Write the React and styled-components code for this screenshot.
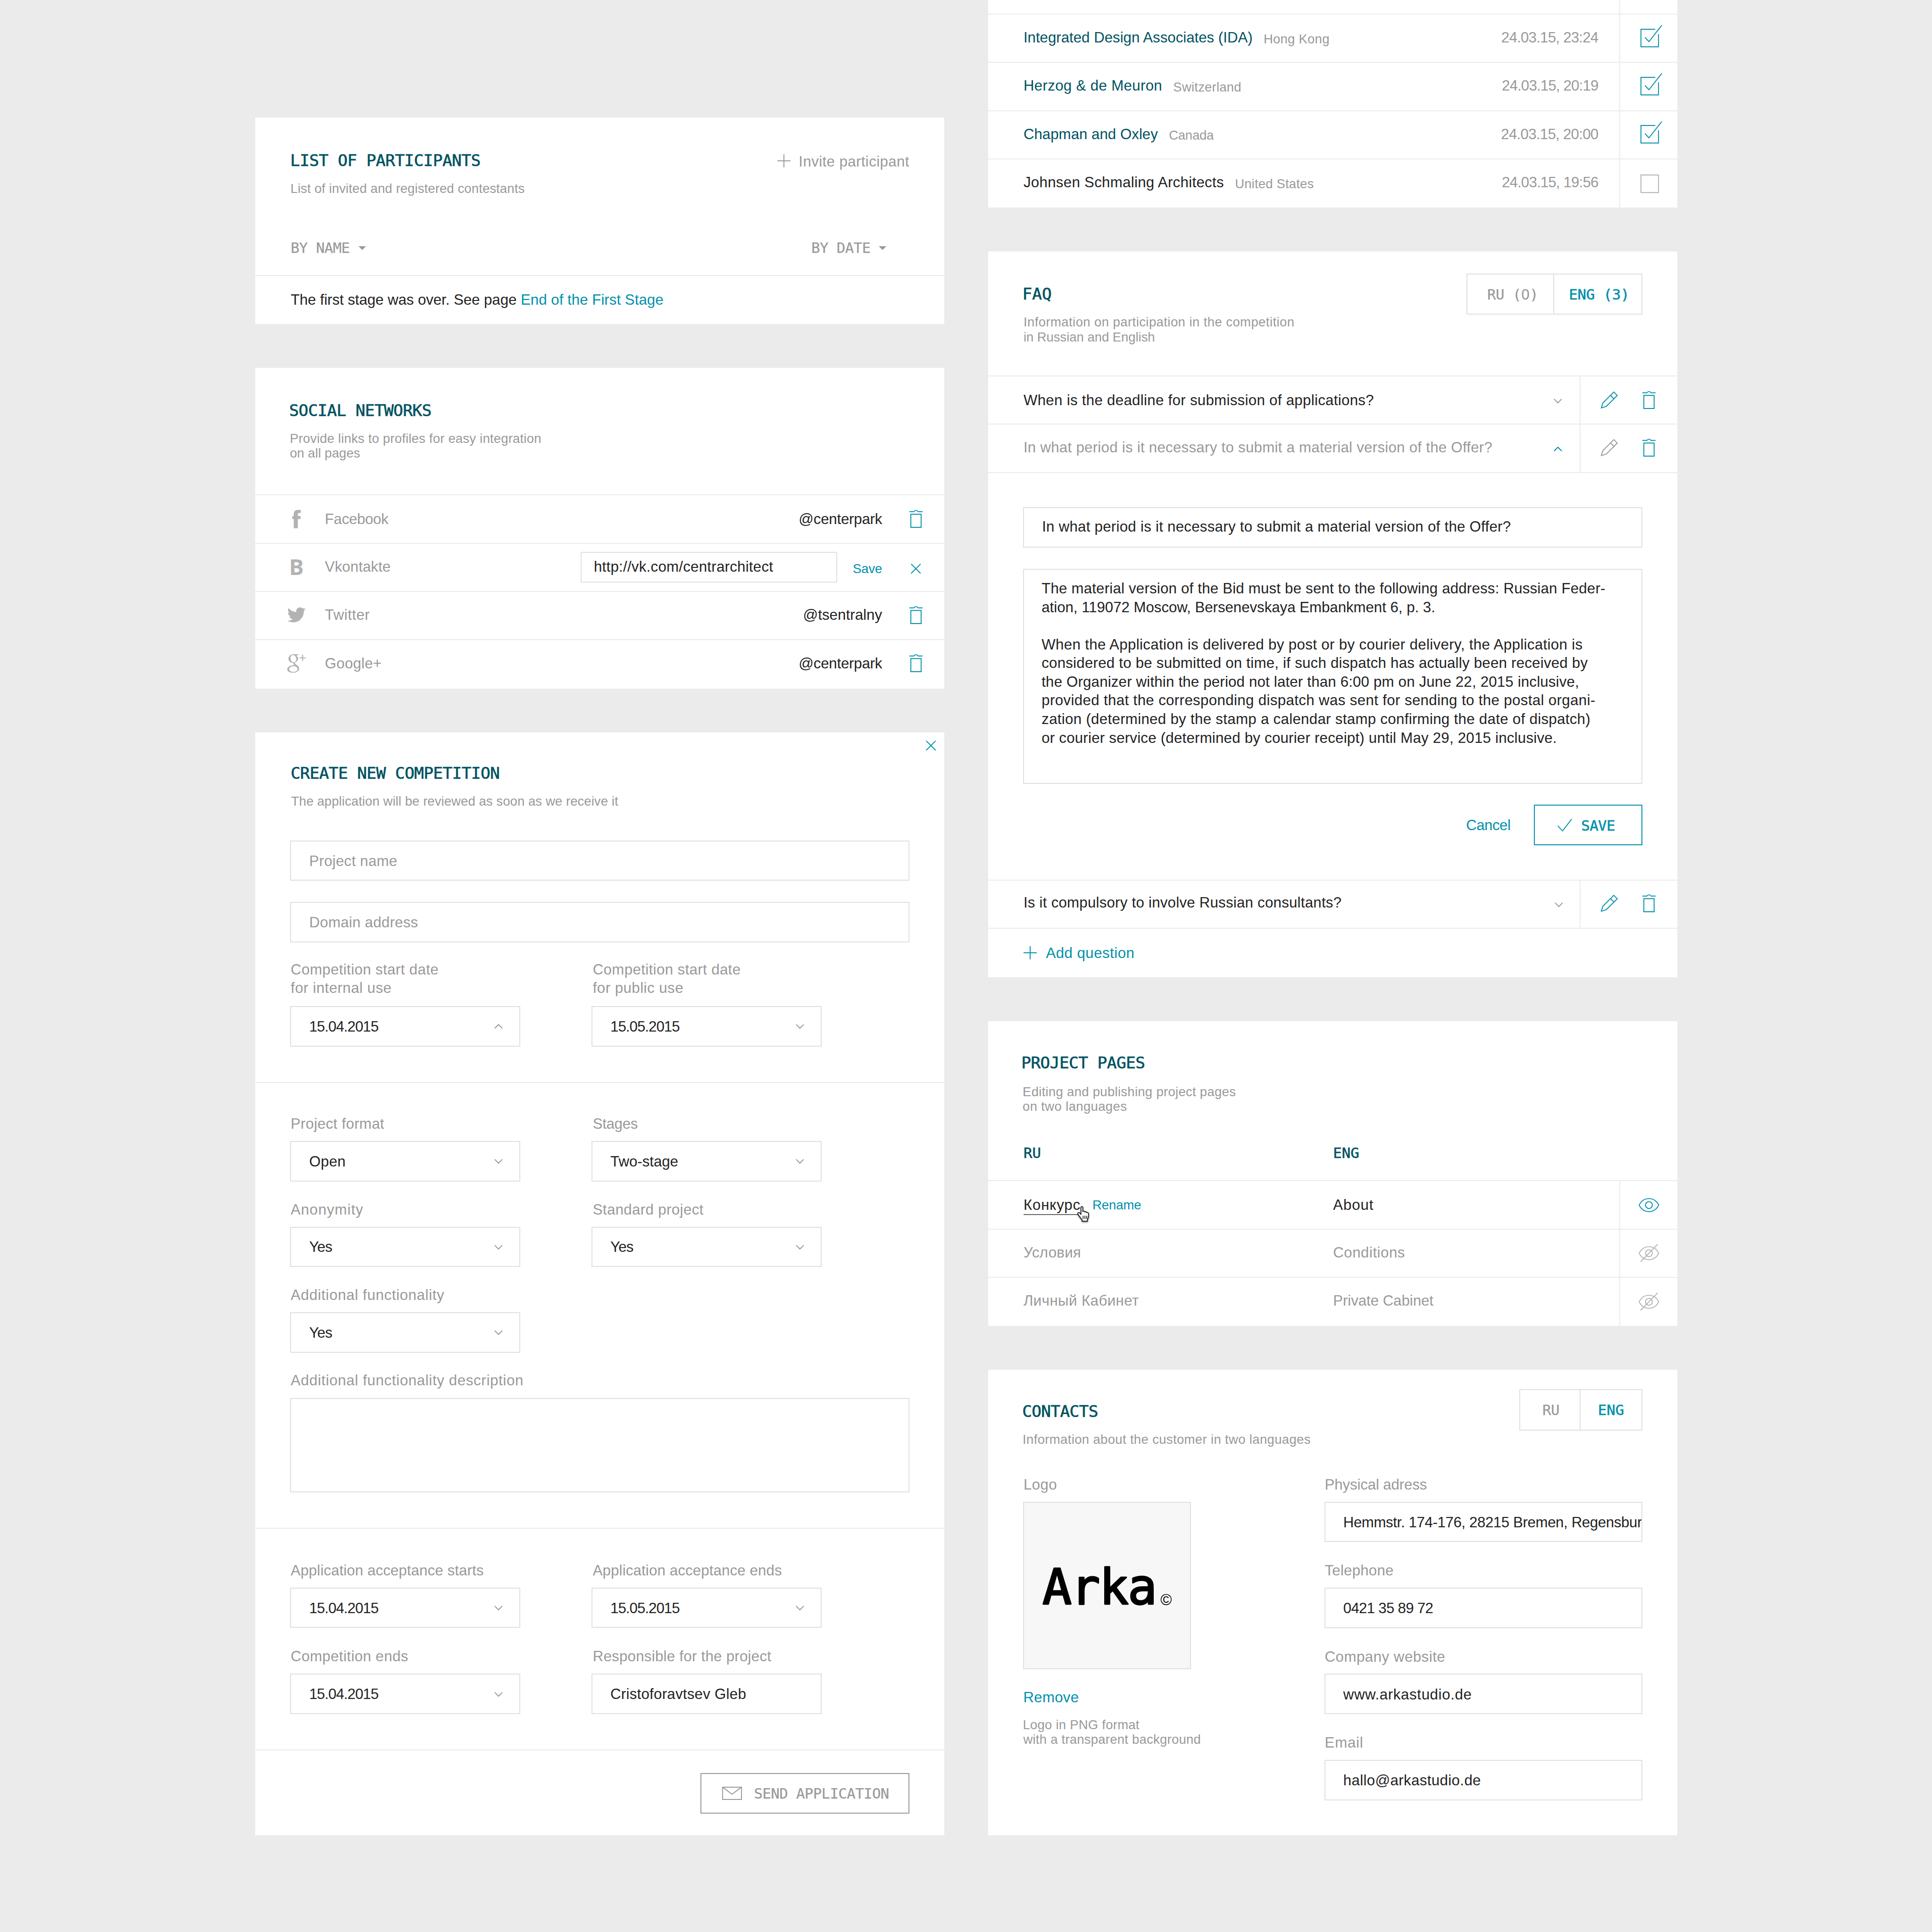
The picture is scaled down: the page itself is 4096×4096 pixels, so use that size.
import React from "react";
import styled, { createGlobalStyle } from "styled-components";
import { FaTwitter } from "react-icons/fa";

const SCALE = 4096 / 4400;
const u = (n) => `${(n * SCALE).toFixed(3)}px`;

const c = {
  page: "#ebebeb",
  line: "#ebebeb",
  field: "#e0e0e0",
  ink: "#222222",
  grey: "#999999",
  soft: "#b3b3b3",
  teal: "#0090ab",
  deep: "#005261",
};
const sans = `"Liberation Sans", Arial, sans-serif`;
const mono = `"DejaVu Sans Mono", monospace`;

const GlobalStyle = createGlobalStyle`
  *, *::before, *::after { box-sizing: border-box; }
  html, body { margin: 0; background: ${c.page}; }
  body { overflow: hidden; }
`;

/* ---------- layout ---------- */

const Page = styled.main`
  display: flex;
  align-items: flex-start;
  gap: ${u(99)};
  width: ${u(4400)};
  height: ${u(4400)};
  padding-left: ${u(581)};
  background: ${c.page};
  color: ${c.ink};
  font-family: ${sans};
  overflow: hidden;
`;

const Column = styled.div`
  display: flex;
  flex-direction: column;
  gap: ${u(100)};
  width: ${u(1570)};
  padding-top: ${(p) => u(p.$top || 0)};
`;

const Card = styled.section`
  position: relative;
  display: flex;
  flex-direction: column;
  background: #fff;
  height: ${(p) => u(p.$h)};
`;

const Header = styled.header`
  display: flex;
  justify-content: space-between;
  align-items: flex-start;
  flex: none;
  height: ${(p) => u(p.$h)};
  padding: 0 ${u(80)};
`;

const Heading = styled.div`
  display: flex;
  flex-direction: column;
  flex: 1;
  padding-top: ${(p) => u(p.$top)};
`;

const Title = styled.h2`
  margin: 0 0 ${(p) => u(p.$gap)} ${(p) => u(p.$x || 0)};
  font: 400 ${u(37)} / ${u(40)} ${mono};
  letter-spacing: ${(p) => u(p.$ls ?? -0.64)};
  color: ${c.deep};
  white-space: nowrap;
  -webkit-text-stroke: 0.7px ${c.deep};
`;

/* ---------- text ---------- */

const Text = styled.span`
  flex: none;
  font-size: ${u(33.5)};
  line-height: ${u(42)};
  letter-spacing: ${(p) => u((p.$ls ?? 0.5) - 0.25)};
  color: ${(p) => c[p.$c || "ink"]};
  white-space: pre;
`;

const Small = styled(Text)`
  font-size: ${u(29.5)};
  line-height: ${u(34)};
  letter-spacing: ${(p) => u((p.$ls ?? 0.7) - 0.5)};
  color: ${(p) => c[p.$c || "grey"]};
  margin-left: ${(p) => u(p.$x || 0)};
`;

const Caps = styled.span`
  padding-top: ${u(2)};
  font: 400 ${u(33)} / ${u(40)} ${mono};
  letter-spacing: ${(p) => u(p.$ls ?? -0.65)};
  color: ${(p) => c[p.$c || "grey"]};
  white-space: pre;
  -webkit-text-stroke: ${(p) => (p.$strong ? "0.6px" : "0.25px")} ${(p) => c[p.$c || "grey"]};
`;

const PlainZero = styled.span`
  display: inline-block;
  width: ${u(19.2)};
  text-align: center;
  letter-spacing: 0;
  font-family: ${sans};
`;

const Spacer = styled.span`
  flex: 1;
`;

/* ---------- rows ---------- */

const Row = styled.div`
  display: flex;
  align-items: stretch;
  flex: none;
  height: ${(p) => u(p.$h || 110)};
  border-top: 2px solid ${c.line};
`;

const RowMain = styled.div`
  display: flex;
  align-items: center;
  flex: 1;
  min-width: 0;
  padding: 0 ${(p) => u(p.$right ?? 80)} ${(p) => u(p.$lift || 0)} ${u(81)};
`;

const RowSide = styled.div`
  display: flex;
  align-items: center;
  justify-content: ${(p) => (p.$w > 200 ? "flex-end" : "center")};
  gap: ${u(56)};
  flex: none;
  width: ${(p) => u(p.$w)};
  padding: 0 ${(p) => u(p.$w > 200 ? 50 : 0)} ${(p) => u(p.$lift || 0)} 0;
  border-left: 2px solid ${c.line};
`;

const Action = styled.a`
  display: flex;
  align-items: center;
  gap: ${(p) => u(p.$gap || 19)};
  margin-top: ${(p) => u(p.$top || 0)};
`;

/* ---------- icons ---------- */

const Svg = styled.svg`
  display: block;
  flex: none;
  overflow: visible;
  width: ${(p) => u(p.$w)};
  height: ${(p) => u(p.$h)};
  fill: none;
  stroke: ${(p) => c[p.$c]};
  stroke-width: 2.1;
`;

const PlusSvg = styled(Svg)`
  margin-bottom: ${u(3)};
`;
const Plus = ({ color = "teal" }) => (
  <PlusSvg $w={30} $h={30} $c={color} viewBox="0 0 30 30">
    <path d="M15 0V30M0 15H30" />
  </PlusSvg>
);

const Trash = () => (
  <Svg $w={30} $h={41} $c="teal" viewBox="0 0 30 41">
    <path d="M0 4H10C11.300 3.900 11.600 1.200 15 1.200S18.700 3.900 20 4H30" />
    <path d="M3.300 10H26.700V39.700H3.300Z" />
  </Svg>
);

const Pencil = ({ color = "teal" }) => (
  <Svg $w={38} $h={38} $c={color} viewBox="0 0 38 38">
    <path d="M1 37.5L4.300 26.300L29.500 1.200L37.300 9L12.300 34.100ZM22 8.700L29.700 16.600" />
  </Svg>
);

const Chevron = ({ up, color = "grey" }) => (
  <Svg $w={19} $h={11} $c={color} viewBox="0 0 19 11">
    <path d={up ? "M.8 10L9.500 1.300L18.200 10" : "M.8 1L9.500 9.700L18.200 1"} />
  </Svg>
);

const Cross = () => (
  <Svg $w={23} $h={23} $c="teal" viewBox="0 0 23 23">
    <path d="M.7.7L22.300 22.300M22.300.7L.7 22.300" />
  </Svg>
);

const BoxSvg = styled(Svg)`
  margin-left: ${u(4)};
`;
const Checkbox = ({ checked }) => (
  <BoxSvg $w={42} $h={42} $c={checked ? "teal" : "soft"} viewBox="0 0 42 42">
    {checked ? (
      <path d="M33.500 1H1V41H41V12M10 19.500L19.200 29.300L48.500-8" />
    ) : (
      <path d="M1 1H41V41H1Z" />
    )}
  </BoxSvg>
);

const Eye = ({ off }) => (
  <Svg $w={47} $h={32} $c={off ? "soft" : "teal"} viewBox="0 0 47 32">
    <path d="M1.200 16C6 6.500 14 1.200 23.500 1.200S41 6.500 45.800 16C41 25.500 33 30.800 23.500 30.800S6 25.500 1.200 16Z" />
    <circle cx="23.500" cy="16" r="7.800" />
    {off && <path d="M43.500-4.500L4.500 35.500" />}
  </Svg>
);

const Envelope = () => (
  <Svg $w={45} $h={30} $c="grey" viewBox="0 0 45 30">
    <path d="M1 1H44V29H1ZM1.500 1.500L22.500 17L43.500 1.500" />
  </Svg>
);

const Tick = () => (
  <Svg $w={33} $h={29} $c="teal" viewBox="0 0 33 29">
    <path d="M.8 16L11.500 27.500L32.200.7" />
  </Svg>
);

const Triangle = styled.i`
  width: 0;
  height: 0;
  margin-top: ${u(3)};
  border: solid transparent;
  border-width: ${u(9.5)} ${u(9)} 0;
  border-top-color: ${c.grey};
`;

const Cursor = styled.svg`
  position: absolute;
  left: ${u(122)};
  top: ${u(24)};
  width: ${u(31)};
  height: ${u(37)};
  overflow: visible;
  filter: drop-shadow(0 2px 1.5px rgba(0, 0, 0, 0.4));
`;

const SocialSlot = styled.span`
  display: flex;
  align-items: center;
  justify-content: center;
  flex: none;
  width: ${u(42)};
  height: ${u(42)};
  margin: 0 ${u(44)} 0 ${u(-8)};
  color: ${c.soft};
  svg {
    display: block;
    width: ${u(42)};
    height: ${u(42)};
  }
`;

const LetterMark = styled.b`
  font: 700 ${u(50)} / ${u(42)} "Open Sans", ${sans};
`;

const SOCIAL_ICONS = {
  fb: (
    <svg viewBox="-11.500 0 42 42" fill="currentColor">
      <path d="M19.300 0H13C6.500 0 3.300 3.200 3.300 9.500V14H0V21H3.300V42H12.700V21H18.500L19.300 14H12.700V10C12.700 8.300 13.500 7 15.500 7H19.300Z" />
    </svg>
  ),
  vk: <LetterMark>B</LetterMark>,
  tw: <FaTwitter />,
  gp: (
    <svg viewBox="0 0 42 42" fill="currentColor">
      <path
        fillRule="evenodd"
        d="M27 0L22.500 3H20C23 4.500 24.800 7 24.800 10.200C24.800 14 22 16.200 19.500 18C17.500 19.500 17 20.500 18 21.800C19.500 24 27.200 26 27.200 32.500C27.200 38.500 21 42.300 13 42.300C5.500 42.300 0 39.500 0 34.500C0 28.500 6.500 25.500 15.500 25C13.800 23.300 13.300 21.500 14.300 19.800C7.500 20.200 2.700 16 2.700 10.300C2.700 4.500 7.500 0 14 0ZM13 1.800C9.500 1.800 7.300 4.500 7.300 8.500C7.300 13.500 10.300 18.200 14.800 18.200C18.500 18.200 20.600 15.500 20.600 11.800C20.600 6.500 17.300 1.800 13 1.800ZM17 27C9.500 27.300 4.300 29.500 4.300 33.800C4.300 37.800 8.500 40.200 14 40.200C19.800 40.200 23.500 37.800 23.500 33.800C23.500 31 21.500 29.500 17 27Z"
      />
      <path d="M28 7.200H33.900V1H36.200V7.200H42V9.500H36.200V15.500H33.900V9.500H28Z" />
    </svg>
  ),
};

/* ---------- form parts ---------- */

const Input = styled.div`
  display: flex;
  align-items: center;
  justify-content: space-between;
  flex: none;
  height: ${(p) => u(p.$h || 92)};
  padding: ${u(1.5)} ${(p) => u(p.$clip ? 0 : 38)} ${(p) => u(p.$lift || 0)} ${u(41)};
  border: 2px solid ${c.field};
  overflow: ${(p) => (p.$clip ? "hidden" : "visible")};
`;

const Area = styled.div`
  height: ${(p) => u(p.$h)};
  padding: ${u(22)} ${u(40)};
  border: 2px solid ${c.field};
`;

const Line = styled(Text)`
  display: block;
  height: ${u(42.5)};
  line-height: ${u(42.5)};
`;

const Field = styled.label`
  display: flex;
  flex-direction: column;
`;

const Label = styled.span`
  display: flex;
  flex-direction: column;
  padding: ${u(1)} 0 ${(p) => u((p.$gap ?? 19) - 1)} ${u(1)};
`;

const Grid = styled.div`
  display: grid;
  grid-template-columns: ${u(524)} ${u(524)};
  column-gap: ${u(162)};
  row-gap: ${(p) => u(p.$gap || 43)};

  ${Field}:nth-child(even) ${Label} {
    padding-left: ${u(3)};
  }
`;

const Section = styled.div`
  flex: none;
  height: ${(p) => u(p.$h)};
  padding: ${(p) => u(p.$top)} ${u(80)} 0;
  border-top: ${(p) => (p.$first ? "0" : `2px solid ${c.line}`)};
`;

const Stack = styled.div`
  display: flex;
  flex-direction: column;
  gap: ${(p) => u(p.$gap)};
  margin-bottom: ${(p) => u(p.$after || 0)};
`;

const Button = styled.button`
  display: flex;
  align-items: center;
  gap: ${(p) => u(p.$gap)};
  width: ${(p) => u(p.$w)};
  height: ${u(92)};
  margin: 0;
  padding: 0 0 0 ${(p) => u(p.$pad)};
  border: 2px solid ${(p) => c[p.$c]};
  background: none;
`;

const Actions = styled.div`
  display: flex;
  justify-content: flex-end;
  align-items: center;
  gap: ${u(53)};
`;

const Switch = styled.div`
  display: grid;
  grid-template-columns: calc(50% - 2px) 1fr;
  width: ${(p) => u(p.$w)};
  height: ${u(94)};
  margin-top: ${(p) => u(p.$top)};
  border: 2px solid ${c.field};
`;

const SwitchItem = styled.div`
  display: flex;
  align-items: center;
  justify-content: center;
  padding-left: ${(p) => u(p.$x || 0)};
  & + & {
    border-left: 2px solid ${c.field};
  }
`;

const CloseButton = styled.a`
  position: absolute;
  top: ${u(19)};
  right: ${u(19)};
`;

/* ---------- card: participants ---------- */

const SortBar = styled.div`
  display: flex;
  justify-content: space-between;
  margin-top: ${u(96)};
  padding: 0 ${u(52)} 0 ${u(1)};
`;
const Sort = styled.span`
  display: flex;
  align-items: center;
  gap: ${u(19.5)};
`;
const HeaderBlock = styled.header`
  flex: none;
  height: ${(p) => u(p.$h)};
  padding: 0 ${u(80)};
`;
const HeaderLine = styled.div`
  display: flex;
  justify-content: space-between;
  align-items: flex-start;
`;

const ParticipantsCard = () => (
  <Card $h={470}>
    <HeaderBlock $h={358}>
      <HeaderLine>
        <Heading $top={77.5}>
          <Title $gap={27} $ls={-0.61}>LIST OF PARTICIPANTS</Title>
          <Small $x={0.5} $ls={0.63}>List of invited and registered contestants</Small>
        </Heading>
        <Action $top={78.5}>
          <Plus color="grey" />
          <Text $c="grey" $ls={0.7}>Invite participant</Text>
        </Action>
      </HeaderLine>
      <SortBar>
        <Sort><Caps>BY NAME</Caps><Triangle /></Sort>
        <Sort><Caps>BY DATE</Caps><Triangle /></Sort>
      </SortBar>
    </HeaderBlock>
    <Row $h={112}>
      <RowMain>
        <Text $ls={0.22}>The first stage was over. See page </Text>
        <Text $c="teal" $ls={0.31}>End of the First Stage</Text>
      </RowMain>
    </Row>
  </Card>
);

/* ---------- card: social networks ---------- */

const SocialAction = styled.span`
  display: flex;
  justify-content: center;
  width: ${u(30)};
  margin-left: ${u(62)};
`;
const LinkInput = styled(Input)`
  width: ${u(584)};
  height: ${u(70)};
  padding: 0 0 ${u(2)} ${u(28)};
  margin: ${u(3)} ${u(36)} 0 0;
`;
const SaveLink = styled(Small)`
  padding-top: ${u(10)};
`;
const CrossSlot = styled.span`
  padding-top: ${u(9)};
`;

const NETWORKS = [
  { id: "fb", name: "Facebook", ls: -0.07, value: "@centerpark", vls: 0.05 },
  { id: "vk", name: "Vkontakte", ls: 0.32, value: "http://vk.com/centrarchitect", vls: 0.55, editing: true, lift: 3 },
  { id: "tw", name: "Twitter", ls: 0.8, value: "@tsentralny", vls: 0.35, lift: 3 },
  { id: "gp", name: "Google+", ls: 0.51, value: "@centerpark", vls: 0.05, lift: 3 },
];

const SocialCard = () => (
  <Card $h={730}>
    <Header $h={288}>
      <Heading $top={77}>
        <Title $gap={26.5} $x={-2.5} $ls={-0.68}>SOCIAL NETWORKS</Title>
        <Small $x={-1} $ls={0.73}>Provide links to profiles for easy integration</Small>
        <Small $x={-1} $ls={0.6}>on all pages</Small>
      </Heading>
    </Header>
    {NETWORKS.map((n) => (
      <Row key={n.id}>
        <RowMain $right={50} $lift={n.lift}>
          <SocialSlot>{SOCIAL_ICONS[n.id]}</SocialSlot>
          <Text $c="grey" $ls={n.ls}>{n.name}</Text>
          <Spacer />
          {n.editing ? (
            <>
              <LinkInput><Text $ls={n.vls}>{n.value}</Text></LinkInput>
              <SaveLink $c="teal" $ls={0.4}>Save</SaveLink>
              <SocialAction><CrossSlot><Cross /></CrossSlot></SocialAction>
            </>
          ) : (
            <>
              <Text $ls={n.vls}>{n.value}</Text>
              <SocialAction><Trash /></SocialAction>
            </>
          )}
        </RowMain>
      </Row>
    ))}
  </Card>
);

/* ---------- card: create competition ---------- */

const DescriptionField = styled(Field)`
  margin-top: ${u(41)};
`;

const Select = ({ label, ls, value, vls, lines, up, plain }) => (
  <Field>
    <Label $gap={lines ? 20.5 : 19}>
      {lines ? (
        lines.map(([t, l]) => <Line key={t} $c="grey" $ls={l}>{t}</Line>)
      ) : (
        <Text $c="grey" $ls={ls}>{label}</Text>
      )}
    </Label>
    <Input>
      <Text $ls={vls}>{value}</Text>
      {!plain && <Chevron up={up} />}
    </Input>
  </Field>
);

const CreateCard = () => (
  <Card $h={2512}>
    <CloseButton><Cross /></CloseButton>
    <Header $h={246}>
      <Heading $top={73.5}>
        <Title $gap={26.5} $x={1}>CREATE NEW COMPETITION</Title>
        <Small $x={2} $ls={0.6}>The application will be reviewed as soon as we receive it</Small>
      </Heading>
    </Header>
    <Section $first $h={550} $top={0}>
      <Stack $gap={48} $after={40}>
        <Input><Text $c="grey" $ls={0.54}>Project name</Text></Input>
        <Input><Text $c="grey" $ls={0.56}>Domain address</Text></Input>
      </Stack>
      <Grid>
        <Select lines={[["Competition start date", 0.68], ["for internal use", 0.78]]} value="15.04.2015" vls={-0.76} up />
        <Select lines={[["Competition start date", 0.68], ["for public use", 0.78]]} value="15.05.2015" vls={-0.76} />
      </Grid>
    </Section>
    <Section $h={1015} $top={71.5}>
      <Grid $gap={42}>
        <Select label="Project format" ls={0.6} value="Open" vls={0.6} />
        <Select label="Stages" ls={-0.05} value="Two-stage" vls={0.26} />
        <Select label="Anonymity" ls={1.31} value="Yes" vls={-0.6} />
        <Select label="Standard project" ls={0.67} value="Yes" vls={-0.6} />
        <Select label="Additional functionality" ls={0.96} value="Yes" vls={-0.6} />
      </Grid>
      <DescriptionField>
        <Label $gap={21}><Text $c="grey" $ls={0.97}>Additional functionality description</Text></Label>
        <Area $h={214} />
      </DescriptionField>
    </Section>
    <Section $h={505} $top={73.5}>
      <Grid>
        <Select label="Application acceptance starts" ls={0.39} value="15.04.2015" vls={-0.76} />
        <Select label="Application acceptance ends" ls={0.42} value="15.05.2015" vls={-0.76} />
        <Select label="Competition ends" ls={0.71} value="15.04.2015" vls={-0.76} />
        <Select label="Responsible for the project" ls={0.56} value="Cristoforavtsev Gleb" vls={0.55} plain />
      </Grid>
    </Section>
    <Section $h={196} $top={52}>
      <Actions>
        <Button $c="grey" $w={476} $pad={48} $gap={27}>
          <Envelope />
          <Caps>SEND APPLICATION</Caps>
        </Button>
      </Actions>
    </Section>
  </Card>
);

/* ---------- card: architects ---------- */

const ARCHITECTS = [
  { name: "Integrated Design Associates (IDA)", ls: 0.27, country: "Hong Kong", cls: 0.78, date: "24.03.15, 23:24", dls: -0.54, on: true },
  { name: "Herzog & de Meuron", ls: 0.64, country: "Switzerland", cls: 0.75, date: "24.03.15, 20:19", dls: -0.62, on: true },
  { name: "Chapman and Oxley", ls: 0.3, country: "Canada", cls: 0.3, date: "24.03.15, 20:00", dls: -0.5, on: true },
  { name: "Johnsen Schmaling Architects", ls: 0.6, country: "United States", cls: 0.7, date: "24.03.15, 19:56", dls: -0.62 },
];
const Country = styled(Small)`
  padding: ${u(6)} 0 0 ${u(25)};
`;
const CutRow = styled(Row)`
  height: ${u(31)};
  border-top: 0;
`;

const ArchitectsCard = () => (
  <Card $h={473}>
    <CutRow>
      <RowMain />
      <RowSide $w={132} />
    </CutRow>
    {ARCHITECTS.map((a, i) => (
      <Row key={a.name} $h={i === 3 ? 112 : 110}>
        <RowMain $right={48} $lift={i === 3 ? 5 : 3}>
          <Text $c={a.on ? "deep" : "ink"} $ls={a.ls}>{a.name}</Text>
          <Country $ls={a.cls}>{a.country}</Country>
          <Spacer />
          <Text $c="grey" $ls={a.dls}>{a.date}</Text>
        </RowMain>
        <RowSide $w={132} $lift={a.on ? 2 : 0}><Checkbox checked={a.on} /></RowSide>
      </Row>
    ))}
  </Card>
);

/* ---------- card: FAQ ---------- */

const OFFER = "In what period is it necessary to submit a material version of the Offer?";
const ANSWER = [
  ["The material version of the Bid must be sent to the following address: Russian Feder-", 0.49],
  ["ation, 119072 Moscow, Bersenevskaya Embankment 6, p. 3.", 0.25],
  [" ", 0],
  ["When the Application is delivered by post or by courier delivery, the Application is", 0.66],
  ["considered to be submitted on time, if such dispatch has actually been received by", 0.53],
  ["the Organizer within the period not later than 6:00 pm on June 22, 2015 inclusive,", 0.47],
  ["provided that the corresponding dispatch was sent for sending to the postal organi-", 0.67],
  ["zation (determined by the stamp a calendar stamp confirming the date of dispatch)", 0.61],
  ["or courier service (determined by courier receipt) until May 29, 2015 inclusive.", 0.52],
];

const ChevronDrop = styled.span`
  padding-top: ${(p) => u(p.$y)};
`;
const Question = ({ text, ls, open, lift = 0, right = 40 }) => (
  <Row>
    <RowMain $right={right} $lift={lift}>
      <Text $c={open ? "grey" : "ink"} $ls={ls}>{text}</Text>
      <Spacer />
      <ChevronDrop $y={lift ? 8 : 5}><Chevron up={open} color={open ? "teal" : "grey"} /></ChevronDrop>
    </RowMain>
    <RowSide $w={222} $lift={lift ? 4 : 0}>
      <Pencil color={open ? "grey" : "teal"} />
      <Trash />
    </RowSide>
  </Row>
);
const Editor = styled.div`
  display: flex;
  flex-direction: column;
  gap: ${u(48)};
  flex: none;
  height: ${u(928)};
  padding: ${u(78)} ${u(80)} 0;
  border-top: 2px solid ${c.line};
`;

const FaqCard = () => (
  <Card $h={1653}>
    <Header $h={282}>
      <Heading $top={77}>
        <Title $gap={26.5} $x={-1.5} $ls={-0.03}>FAQ</Title>
        <Small $x={1} $ls={0.97}>Information on participation in the competition</Small>
        <Small $x={1} $ls={0.47}>in Russian and English</Small>
      </Heading>
      <Switch $w={400} $top={50}>
        <SwitchItem $x={10}><Caps $ls={-0.5}>RU (<PlainZero>0</PlainZero>)</Caps></SwitchItem>
        <SwitchItem $x={6}><Caps $c="teal" $strong $ls={-0.2}>ENG (3)</Caps></SwitchItem>
      </Switch>
    </Header>
    <Question text="When is the deadline for submission of applications?" ls={0.6} />
    <Question text={OFFER} ls={0.56} open lift={5} />
    <Editor>
      <Input $lift={5}><Text $ls={0.56}>{OFFER}</Text></Input>
      <Area $h={490}>
        {ANSWER.map(([t, l]) => <Line key={t} $ls={l}>{t}</Line>)}
      </Area>
      <Actions>
        <Text $c="teal" $ls={-0.28}>Cancel</Text>
        <Button $c="teal" $w={247} $pad={52} $gap={21}>
          <Tick />
          <Caps $c="teal" $strong>SAVE</Caps>
        </Button>
      </Actions>
    </Editor>
    <Question text="Is it compulsory to involve Russian consultants?" ls={0.53} lift={6} right={38} />
    <Row $h={112}>
      <RowMain>
        <Action $gap={21} $top={2}><Plus /><Text $c="teal" $ls={0.79}>Add question</Text></Action>
      </RowMain>
    </Row>
  </Card>
);

/* ---------- card: project pages ---------- */

const Half = styled.div`
  display: flex;
  align-items: center;
  gap: ${u(27)};
  flex: none;
  width: ${u(705)};
`;
const PageHeads = styled.div`
  display: flex;
  margin-top: ${u(67)};
  padding-left: ${u(1)};
`;
const Hovered = styled.span`
  position: relative;
  margin-top: ${u(2)};
  border-bottom: 2px solid #666;
`;

const PageRow = ({ children, lift, last, off, en, els }) => (
  <Row $h={last ? 112 : 110}>
    <RowMain $right={0} $lift={lift}>
      <Half>{children}</Half>
      <Half><Text $c={off ? "grey" : "ink"} $ls={els}>{en}</Text></Half>
    </RowMain>
    <RowSide $w={132}><Eye off={off} /></RowSide>
  </Row>
);

const PagesCard = () => (
  <Card $h={694}>
    <HeaderBlock $h={362}>
      <Heading $top={75}>
        <Title $gap={28.5} $x={-4} $ls={-0.61}>PROJECT PAGES</Title>
        <Small $x={-1} $ls={0.83}>Editing and publishing project pages</Small>
        <Small $x={-1} $ls={0.9}>on two languages</Small>
      </Heading>
      <PageHeads>
        <Half><Caps $c="deep" $strong $ls={0}>RU</Caps></Half>
        <Half><Caps $c="deep" $strong $ls={0}>ENG</Caps></Half>
      </PageHeads>
    </HeaderBlock>
    <PageRow en="About" els={1.23}>
      <Hovered>
        <Text as="div" $ls={1.2}>Конкурс</Text>
        <Cursor viewBox="0 0 30 36">
          <path
            d="M9 3.500C9 .6 13.200.6 13.200 3.500V12C14 10.400 17.200 10.800 17.500 13C18.400 11.600 21.400 12.200 21.600 14.400C22.700 13.200 26 14 26 17V22.500C26 26 23.800 27.500 23.500 30V33.500H11.500V30.500C9.500 28 6 23.500 4 20.500C2.500 18.200 1 16.200 2.600 14.900C4.600 13.400 7.400 15.800 9 18.500Z"
            fill="#fff"
            stroke="#222"
            strokeWidth="2"
            strokeLinejoin="round"
          />
          <path d="M13.900 21.500V28.500M17.900 21.500V28.500M21.700 21.500V28.500" fill="none" stroke="#222" strokeWidth="1.800" />
        </Cursor>
      </Hovered>
      <Small $c="teal" $ls={0.43}>Rename</Small>
    </PageRow>
    <PageRow off en="Conditions" els={0.84} lift={3}>
      <Text $c="grey" $ls={0.57}>Условия</Text>
    </PageRow>
    <PageRow off last en="Private Cabinet" els={0.22} lift={5}>
      <Text $c="grey" $ls={0.75}>Личный Кабинет</Text>
    </PageRow>
  </Card>
);

/* ---------- card: contacts ---------- */

const ContactColumns = styled.div`
  display: flex;
  justify-content: space-between;
  padding: 0 ${u(80)};
`;
const LogoColumn = styled.div`
  display: flex;
  flex-direction: column;
  align-items: flex-start;
`;
const LogoBox = styled.div`
  width: ${u(382)};
  height: ${u(382)};
  margin-bottom: ${u(42.5)};
  border: 2px solid ${c.field};
  background: #f7f7f7;
`;
const LogoSvg = styled.svg`
  display: block;
  width: 100%;
  height: 100%;
`;
const Fields = styled(Stack)`
  width: ${u(724)};
`;
const RemoveLink = styled(Text)`
  margin: 0 0 ${u(24.5)} ${u(0.5)};
`;
const ContactInput = styled(Input)`
  padding-top: ${u(2.5)};
`;

const CONTACTS = [
  ["Physical adress", 0.14, "Hemmstr. 174-176, 28215 Bremen, Regensbur", -0.14],
  ["Telephone", 0.51, "0421 35 89 72", -0.5],
  ["Company website", 0.82, "www.arkastudio.de", 0.95],
  ["Email", 1.13, "hallo@arkastudio.de", 0.67],
];

const ContactsCard = () => (
  <Card $h={1060}>
    <Header $h={239}>
      <Heading $top={75}>
        <Title $gap={26.5} $x={-2} $ls={-0.7}>CONTACTS</Title>
        <Small $x={-1} $ls={0.89}>Information about the customer in two languages</Small>
      </Heading>
      <Switch $w={280} $top={44}>
        <SwitchItem $x={4}><Caps>RU</Caps></SwitchItem>
        <SwitchItem><Caps $c="teal" $strong $ls={0}>ENG</Caps></SwitchItem>
      </Switch>
    </Header>
    <ContactColumns>
      <LogoColumn>
        <Label><Text $c="grey" $ls={0.7}>Logo</Text></Label>
        <LogoBox>
          <LogoSvg viewBox="0 0 378 378">
            <text
              x="42"
              y="231.500"
              fontFamily="DejaVu Sans Mono"
              fontSize="111"
              letterSpacing="-2"
              stroke="#000"
              strokeWidth="3.500"
              strokeLinejoin="round"
            >
              Arka
            </text>
            <text x="311" y="233" fontFamily="Liberation Sans" fontSize="35">©</text>
          </LogoSvg>
        </LogoBox>
        <RemoveLink $c="teal" $ls={0.57}>Remove</RemoveLink>
        <Small $x={-0.5} $ls={0.77}>Logo in PNG format</Small>
        <Small $x={0.5} $ls={0.77}>with a transparent background</Small>
      </LogoColumn>
      <Fields $gap={43}>
        {CONTACTS.map(([label, ls, value, vls]) => (
          <Field key={label}>
            <Label><Text $c="grey" $ls={ls}>{label}</Text></Label>
            <ContactInput $clip><Text $ls={vls}>{value}</Text></ContactInput>
          </Field>
        ))}
      </Fields>
    </ContactColumns>
  </Card>
);

export default function App() {
  return (
    <>
      <GlobalStyle />
      <Page>
        <Column $top={268}>
          <ParticipantsCard />
          <SocialCard />
          <CreateCard />
        </Column>
        <Column>
          <ArchitectsCard />
          <FaqCard />
          <PagesCard />
          <ContactsCard />
        </Column>
      </Page>
    </>
  );
}
